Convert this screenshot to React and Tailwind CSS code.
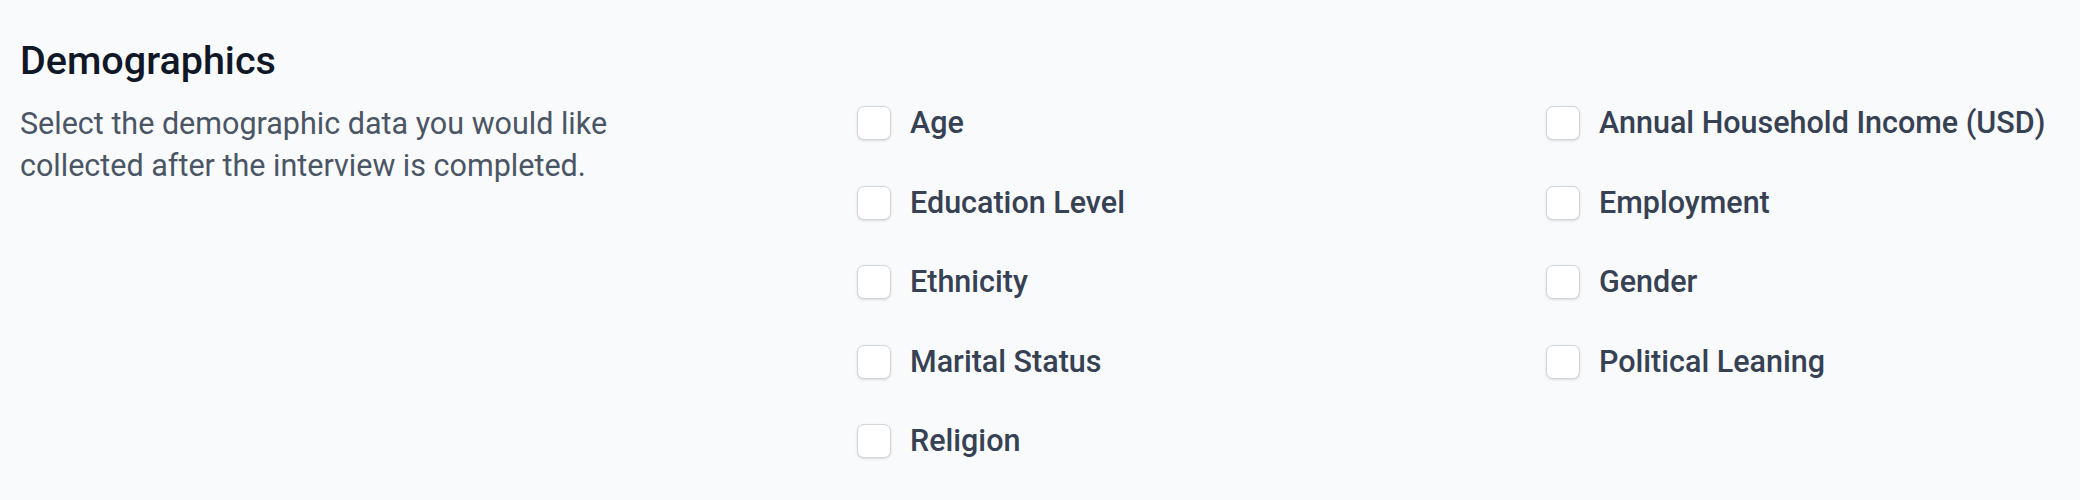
const leftItems = ["Age", "Education Level", "Ethnicity", "Marital Status", "Religion"];
const rightItems = [
  "Annual Household Income (USD)",
  "Employment",
  "Gender",
  "Political Leaning",
];

function Option({ label }) {
  return (
    <label className="flex h-[34px] items-center gap-[19px]">
      <input
        type="checkbox"
        className="h-[34px] w-[34px] shrink-0 appearance-none rounded-[7px] border-[1.5px] border-gray-300 bg-white shadow-sm"
      />
      <span className="text-[30.5px] font-medium leading-[34px] text-gray-700">{label}</span>
    </label>
  );
}

export default function App() {
  return (
    <div
      className="min-h-screen bg-gray-50 px-[20px] pt-[37px]"
      style={{ fontFamily: "Roboto, 'Noto Sans', sans-serif" }}
    >
      <div className="grid grid-cols-[837px_1fr]">
        <div>
          <h2 className="text-[39.5px] font-medium leading-[47px] text-gray-900">Demographics</h2>
          <p className="mt-[18.5px] w-[620px] text-[30.5px] leading-[42.7px] text-gray-600">
            Select the demographic data you would like collected after the interview is completed.
          </p>
        </div>
        <div className="grid grid-cols-[689px_1fr] pt-[69px]">
          <div className="flex flex-col gap-y-[45.6px]">
            {leftItems.map((item) => (
              <Option key={item} label={item} />
            ))}
          </div>
          <div className="flex flex-col gap-y-[45.6px]">
            {rightItems.map((item) => (
              <Option key={item} label={item} />
            ))}
          </div>
        </div>
      </div>
    </div>
  );
}
